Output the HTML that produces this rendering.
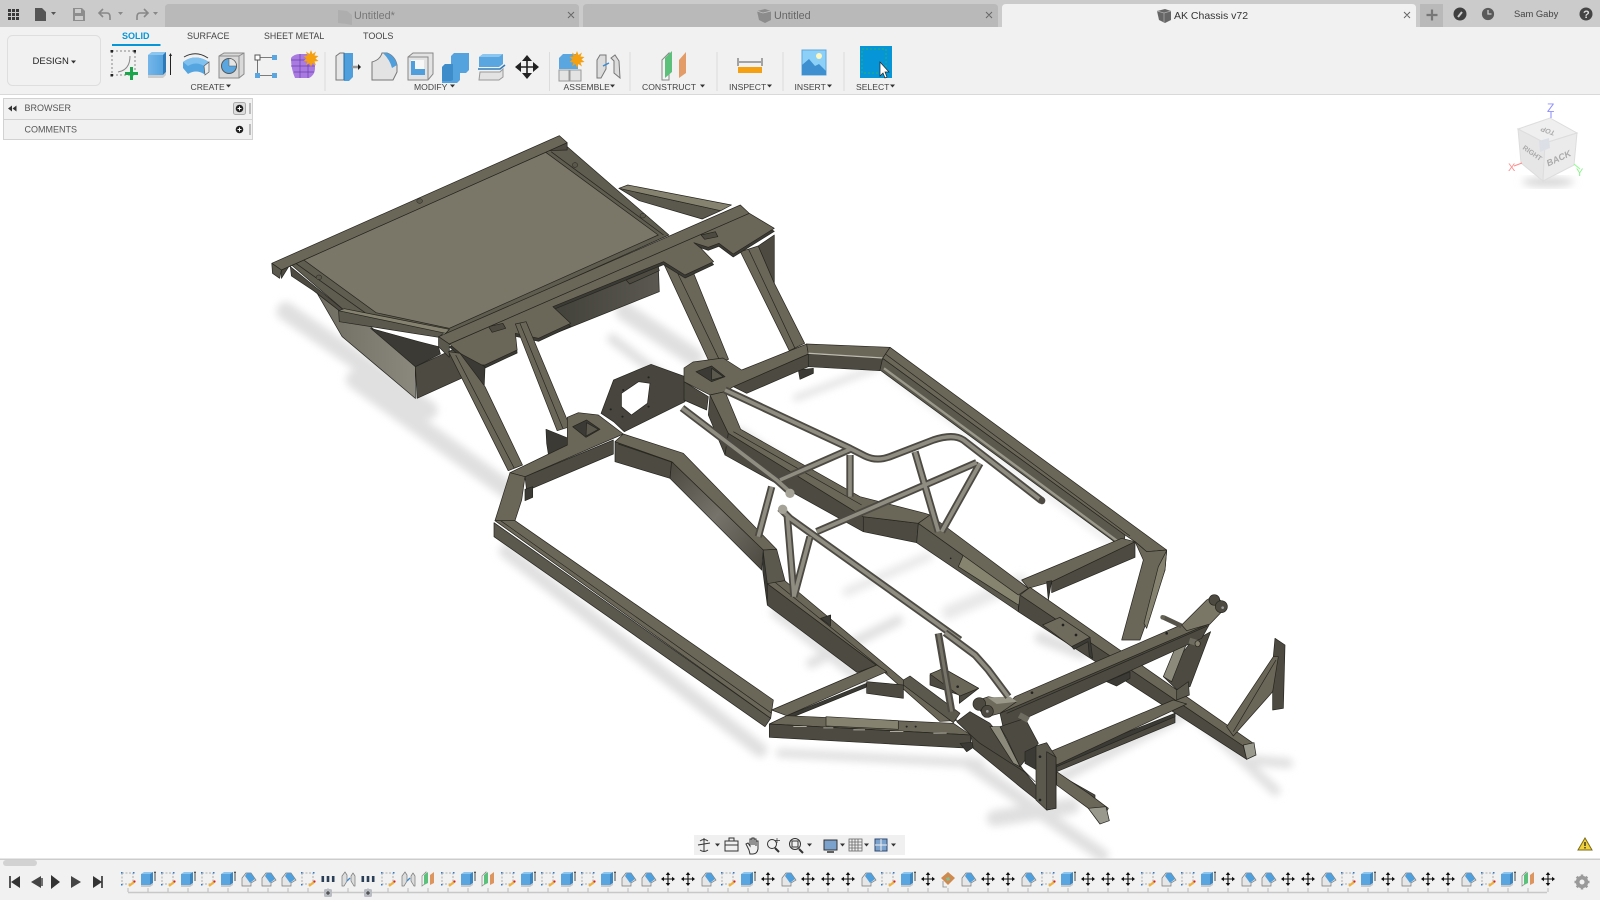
<!DOCTYPE html>
<html><head><meta charset="utf-8"><title>AK Chassis v72</title>
<style>
html,body{margin:0;padding:0;background:#fff;width:1600px;height:900px;overflow:hidden}
svg{display:block;position:absolute;left:0;top:0}
text{font-family:"Liberation Sans",sans-serif;fill:#444;font-size:9px}
.lb{font-size:8.6px}
.t,.s,.d,.l,.m{stroke:#26251f;stroke-width:.7;vector-effect:non-scaling-stroke;stroke-linejoin:round}
.t{fill:#6b6758}.s{fill:#4c4a41}.d{fill:#3b3a34}.l{fill:#85826f}.m{fill:#5b594e}
.ln{fill:none;stroke:#26251f;stroke-width:.7;vector-effect:non-scaling-stroke}
.sep{stroke:#dcdcdc;stroke-width:1}
</style></head><body>
<svg width="1600" height="900" viewBox="0 0 1600 900" xmlns="http://www.w3.org/2000/svg">
<defs>
<filter id="b" x="-20%" y="-20%" width="140%" height="140%"><feGaussianBlur stdDeviation="4"/></filter>
<linearGradient id="side1" x1="0" y1="0" x2="1" y2="0"><stop offset="0" stop-color="#6f6d62"/><stop offset="1" stop-color="#8b897e"/></linearGradient>
<linearGradient id="side2" x1="0" y1="0" x2="1" y2="0"><stop offset="0" stop-color="#3f3e37"/><stop offset="1" stop-color="#5a5850"/></linearGradient>
<linearGradient id="side3" x1="0" y1="0" x2="1" y2="1"><stop offset="0" stop-color="#4a483f"/><stop offset=".5" stop-color="#75736a"/><stop offset="1" stop-color="#4a483f"/></linearGradient>
<linearGradient id="bl" x1="0" y1="0" x2="1" y2="0"><stop offset="0" stop-color="#74b6ea"/><stop offset="1" stop-color="#4f9fdc"/></linearGradient>

<g id="S"><rect x="-6" y="-6" width="11" height="11" fill="none" stroke="#9a9a9a" stroke-width=".8" stroke-dasharray="2 1.5"/><g fill="#2a7ad0"><rect x="-7" y="-7" width="1.5" height="1.5"/><rect x="5" y="-7" width="1.5" height="1.5"/><rect x="-7" y="5" width="1.5" height="1.5"/></g><path d="M1 7L6 3" stroke="#f0b23c" stroke-width="2.2"/><circle cx="6.5" cy="2.5" r="1.1" fill="#e02020"/></g>
<g id="E"><path d="M-7-5h9v11h-9z" fill="#58a5e0"/><path d="M-7-5l3-2h9l-3 2z" fill="#8cc6ef"/><path d="M2-5l3-2v11l-3 2z" fill="#3c86c2"/><path d="M-7 6h9l3-2v2l-3 2h-9z" fill="#c9c9c9"/><path d="M7-7v9" stroke="#222" stroke-width=".8"/><path d="M6-6l1-2 1 2z" fill="#222"/></g>
<g id="F"><path d="M-6 7v-8l4-5h5l5 7-5 3v3z" fill="#e6e6e6" stroke="#777" stroke-width=".7"/><path d="M-1-6h4l4 6-5 4-5-7z" fill="#4f9fdc"/></g>
<g id="M"><path d="M-5 0h10M0-5v10" stroke="#111" stroke-width="1.1"/><path d="M-7 0l3-2.300v4.600zM7 0l-3-2.300v4.600zM0-7l-2.300 3h4.600zM0 7l-2.300-3h4.600z" fill="#111"/></g>
<g id="P"><g fill="#2a3e58"><rect x="-6.500" y="-3" width="2.600" height="6"/><rect x="-1.300" y="-3" width="2.600" height="6"/><rect x="3.900" y="-3" width="2.600" height="6"/></g></g>
<g id="J"><path d="M-6 7v-10l3-4 2 3v6l-3 5zM6 7l-3-5v-5l2-3 2 3v10z" fill="#ddd" stroke="#777" stroke-width=".7"/><path d="M-1 2l3-3" stroke="#3a8ad0" stroke-width="1.3"/></g>
<g id="L"><path d="M-6 7v-10l4-4v11z" fill="#f1f1f1" stroke="#888" stroke-width=".7"/><path d="M-4 6v-10l4-3v11z" fill="#5cc07a"/><path d="M2 6v-10l4-3v11z" fill="#dd9560"/></g>
<g id="D"><path d="M0-7l7 6-7 7-7-7z" fill="#cf8a4f"/><path d="M-2-1l3-1 1 3-3 1z" fill="#7fbf9a"/><path d="M-5 2v6h4" fill="none" stroke="#888" stroke-width=".8"/></g>
</defs>

<rect width="1600" height="900" fill="#fff"/>

<!-- SHADOWS -->
<g transform="scale(1.0204)" filter="url(#b)" fill="none" stroke="#e0e0e0" stroke-linecap="round">
<path d="M280 305L420 402" stroke-width="18"/>
<path d="M348 372L500 482" stroke-width="18"/>
<path d="M612 305L680 350" stroke-width="18"/>
<path d="M600 332L660 378" stroke-width="10"/>
<path d="M496 540L745 735" stroke-width="14"/>
<path d="M765 738L960 748" stroke-width="9"/>
<path d="M950 748L1080 838" stroke-width="13"/>
<path d="M725 424L850 512" stroke-width="10"/>
<path d="M780 390L860 360" stroke-width="6"/>
<path d="M760 600L852 672" stroke-width="10"/>
<path d="M975 802L1050 790" stroke-width="16"/>
<path d="M1040 762L1160 700" stroke-width="11"/>
<path d="M1170 700L1250 775" stroke-width="10"/>
<path d="M1228 745L1262 748" stroke-width="10"/>
<path d="M795 650L880 608" stroke-width="10"/>
<path d="M1020 625L1060 640" stroke-width="12"/>
<path d="M930 600L1000 570" stroke-width="14" opacity=".7"/>
<path d="M830 580L910 545" stroke-width="9" opacity=".7"/>
<path d="M870 365L1100 540" stroke-width="5" opacity=".8"/>
</g>

<!-- REAR SEAT -->
<g transform="translate(260 120) scale(.35714 .33333)">
<polygon fill="url(#side2)" stroke="#26251f" stroke-width=".7" vector-effect="non-scaling-stroke" points="820,555 1115,430 1118,515 780,660"/>
<polygon fill="url(#side1)" stroke="#26251f" stroke-width=".7" vector-effect="non-scaling-stroke" points="160,520 230,650 435,835 435,740 310,620 220,570"/>
<polygon class="s" points="435,740 640,640 640,738 440,835"/>
<polygon class="d" points="310,625 445,665 500,680 505,702 435,740"/>
<polygon class="t" points="1130,430 1215,462 1312,718 1262,735"/>
<path class="ln" d="M1165 450L1290 728"/>
<polygon class="s" points="1395,378 1440,345 1440,490"/>
<polygon class="t" points="1345,395 1395,378 1440,490 1525,670 1482,692"/>
<path class="ln" d="M1368 388L1498 685"/>
<polygon class="m" points="1005,205 1290,272 1238,297 1062,242"/>
<polygon class="l" points="1005,205 1030,195 1320,255 1290,272"/>
<polygon class="t" points="85,432 805,90 860,80 1145,345 530,640 325,585 240,575" style="fill:#5f5c50"/>
<polygon fill="#7b7768" stroke="#26251f" stroke-width=".7" vector-effect="non-scaling-stroke" points="120,418 800,97 1115,345 530,625 325,578"/>
<polygon class="s" points="85,440 240,575 222,572 150,512 88,468"/>
<path class="ln" d="M100 430L310 590M815 95L1130 345M130 412L800 90"/>
<polygon class="s" points="60,450 860,68 860,90 805,92 85,432 60,475"/>
<polygon class="t" points="33,430 838,47 860,68 60,450"/>
<polygon class="m" points="33,430 60,450 55,475 35,460"/>
<g fill="#5a574b" stroke="#111" stroke-width="1.100" vector-effect="non-scaling-stroke"><ellipse cx="447" cy="243" rx="8" ry="7"/><ellipse cx="165" cy="472" rx="8" ry="7"/><ellipse cx="882" cy="135" rx="8" ry="7"/><ellipse cx="1072" cy="287" rx="8" ry="7"/></g>
<polygon class="m" points="220,572 525,630 500,652 222,605"/>
<polygon class="l" points="220,572 236,566 530,628 520,640"/>
<polygon class="d" transform="translate(0 9)" points="530,672 1370,280 1440,325 1325,402 1285,370 1255,382 1215,368 1235,385 1270,425 1190,465 1130,425 820,560 870,610 780,655 715,640 720,690 630,735 600,735"/>
<polygon class="t" points="530,672 1370,280 1440,325 1325,402 1285,370 1255,382 1215,368 1235,385 1270,425 1190,465 1130,425 820,560 870,610 780,655 715,640 720,690 630,735 600,735"/>
<polygon class="s" points="640,620 680,610 688,625 650,637"/>
<polygon class="s" points="1235,345 1275,335 1282,350 1245,358"/>
<polygon class="s" points="1025,480 1115,440 1118,452 1035,492"/>
<polygon class="t" points="500,650 1345,255 1370,280 530,672"/>
<polygon class="m" points="500,650 530,672 530,712 500,680"/>
<polygon class="d" points="560,700 630,740 625,870"/>
<polygon class="t" points="528,695 560,700 630,800 735,1035 695,1052"/>
<path class="ln" d="M548 705L712 1045"/>
<polygon class="t" points="715,612 745,605 868,920 832,932"/>
<path class="ln" d="M728 610L848 925"/>
<path fill="#47453d" stroke="#26251f" stroke-width=".7" vector-effect="non-scaling-stroke" fill-rule="evenodd" d="M955 880L990 780 1095 733 1190 770 1190 845 1020 935 990 905ZM1012 820L1012 860 1040 885 1085 850 1092 790 1060 785Z"/>
<g fill="#23221e"><circle cx="982" cy="868" r="3"/><circle cx="1017" cy="810" r="3"/><circle cx="1088" cy="772" r="3"/><circle cx="1088" cy="860" r="3"/><circle cx="1015" cy="890" r="3"/></g>
</g>

<!-- MAIN FRAME left half -->
<g transform="translate(480 330) scale(.33333)">
<polygon class="d" points="198,298 265,325 278,352 205,372 200,340"/>
<polygon class="s" points="135,440 400,330 400,372 140,482"/>
<polygon class="t" points="90,428 262,345 262,262 295,248 355,255 430,312 135,440"/>
<polygon class="d" points="278,290 320,270 360,298 318,322"/>
<polygon class="m" points="320,278 355,298 318,318"/>
<polygon class="m" points="42,578 872,1165 855,1190 42,620"/>
<polygon class="t" points="90,428 135,440 125,510 105,572 45,572"/>
<polygon class="t" points="45,572 105,572 880,1110 872,1165"/>
<path class="ln" d="M62 572L875 1150"/>
<polygon class="d" points="135,478 158,470 158,502 135,512"/>
<polygon class="s" points="405,335 575,395 570,445 405,395"/>
<polygon fill="url(#side3)" stroke="#26251f" stroke-width=".7" vector-effect="non-scaling-stroke" points="575,395 850,660 845,720 570,445"/>
<polygon class="t" points="430,312 610,370 890,658 850,660 575,395 405,335"/>
<path class="ln" d="M415 342L580 398"/>
<polygon class="m" points="850,660 890,658 915,752 862,762 850,700"/>
<polygon class="d" points="850,668 862,762 862,825 848,720"/>
</g>

<!-- LONG RAIL to front -->
<g transform="scale(1.0204)">
<polygon class="s" points="752,572 859,652 840,659 752,593"/>
<polygon class="t" points="769,569 885,666 938,706 921,707 859,652 752,572"/>
<path class="ln" d="M760 571L870 660"/>
</g>

<!-- MAIN FRAME upper/centre -->
<g transform="translate(700 340) scale(.33333)">
<polygon class="d" points="295,90 340,85 340,100 300,118"/>
<polygon class="s" points="100,140 325,42 325,80 140,160"/>
<polygon class="s" points="-48,125 25,170 20,210 -48,180"/>
<polygon class="t" points="-48,84 -21,66 69,54 125,90 320,12 325,42 100,140 75,155 30,165 -48,125"/>
<polygon class="d" points="-12,95 35,78 75,110 35,125"/>
<polygon class="m" points="35,85 70,110 35,120"/>
<polygon class="s" points="320,12 570,22 548,55 325,42" style="fill:#6b6758"/>
<polygon class="s" points="325,42 548,55 540,92 325,80"/>
<path fill="#bdbbb0" d="M325 38L548 52 548 56 325 42Z"/>
<polygon class="m" points="548,55 1275,585 1270,625 540,90"/>
<path d="M552 85L1275 620" stroke="#9a988b" stroke-width="7" fill="none"/>
<polygon class="t" points="570,22 1400,630 1340,635 1305,605 1275,585 548,55"/>
<path class="ln" d="M556 42L1290 588"/>
<polygon class="s" points="30,165 85,280 75,345 25,225"/>
<polygon class="s" points="85,280 490,530 490,575 75,345"/>
<polygon class="s" points="490,530 655,550 650,608 490,575"/>
<polygon class="t" points="30,165 75,155 122,268 480,470 675,520 690,525 655,550 490,530 85,280"/>
<path class="ln" d="M100 275L485 495"/>
<polygon class="s" points="1055,725 1305,605 1305,652 1055,758"/>
<polygon class="t" points="965,720 1265,595 1305,605 1055,725 985,745"/>
<polygon class="d" points="1040,725 1055,722 1045,780"/>
<polygon class="m" points="655,550 955,765 955,815 650,608"/>
<polygon class="l" points="775,680 800,622 985,745 955,795" style="fill:#86836f"/>
<polygon class="t" points="655,550 690,525 985,745 955,765"/>
<circle cx="752" cy="655" r="2.500" fill="#222"/>
<polygon class="t" points="1305,605 1340,635 1400,630 1395,690 1320,900 1265,900 1330,660"/>
<polygon class="l" points="1400,632 1395,690 1340,865 1332,850 1375,680"/>
<polygon class="d" points="362,835 392,825 392,858"/>
</g>

<!-- Front-left region -->
<g transform="translate(740 600) scale(.33333)">
<polygon class="d" points="140,347 380,250 378,262 165,348"/>
<polygon class="t" points="95,330 410,195 440,215 140,347"/>
<polygon class="s" points="380,245 490,255 490,295 380,280"/>
<polygon class="s" points="570,225 610,205 716,265 658,310 658,285 570,255"/>
<polygon class="t" points="570,222 610,205 716,265 660,288"/>
<circle cx="653" cy="260" r="4" fill="#222"/>
<polygon class="m" points="490,240 510,228 660,340 640,368 490,255"/>
<polygon class="t" points="88,372 140,347 640,370 692,405"/>
<polygon class="s" points="88,372 692,405 692,445 88,412"/>
<polygon class="d" points="660,430 726,425 680,455"/>
<polygon class="l" points="258,350 475,362 475,388 258,378"/>
<g fill="#c8c6bb" opacity=".8"><rect x="160" y="378" width="40" height="3"/><rect x="250" y="382" width="30" height="3"/><rect x="340" y="388" width="35" height="3"/><rect x="450" y="393" width="40" height="3"/><rect x="580" y="398" width="40" height="3"/></g>
<circle cx="500" cy="380" r="3" fill="#222"/><circle cx="527" cy="380" r="3" fill="#222"/>
<polygon class="s" points="692,405 850,510 890,560 890,600 840,560 700,445"/>
<polygon class="s" points="650,365 690,335 750,370 790,420 850,510 885,545 860,520 720,430 692,405"/>
</g>

<!-- Front -->
<g transform="translate(900 500) scale(.33333)">
<polygon class="s" points="360,285 1030,738 1040,778 355,335"/>
<polygon class="t" points="360,285 390,262 1060,730 1030,738"/>
<polygon fill="#9a998e" stroke="#26251f" stroke-width=".7" vector-effect="non-scaling-stroke" points="1030,735 1062,728 1068,765 1040,778"/>
<polygon fill="#6e6a5c" stroke="#26251f" stroke-width=".7" vector-effect="non-scaling-stroke" points="428,375 480,352 570,412 515,440"/>
<circle cx="489" cy="375" r="4" fill="#222"/><circle cx="528" cy="405" r="4" fill="#222"/>
<polygon class="d" points="515,440 570,412 578,475 568,468 564,425 522,448"/>
<polygon class="d" points="620,545 690,515 690,535 650,558"/>
<polygon class="s" points="1118,570 1120,470 1125,415 1155,435 1150,625 1118,630"/>
<polygon class="t" points="980,680 1120,470 1135,470 1118,575 1000,708"/>
<path class="ln" d="M1000 695L1128 480"/>
<polygon class="s" points="470,795 825,640 825,668 470,815"/>
<polygon class="d" points="470,780 825,640 825,650 470,800"/>
<polygon class="t" points="450,755 820,600 860,612 470,795"/>
<polygon class="s" points="380,760 470,820 585,885 585,905 470,840 380,790"/>
<polygon class="t" points="470,815 565,880 625,925 600,972 565,925 470,855"/>
<polygon fill="#9a998e" stroke="#26251f" stroke-width=".7" vector-effect="non-scaling-stroke" points="565,925 618,920 628,962 600,972"/>
<polygon class="s" points="870,430 932,395 870,560 830,568 790,530"/>
<polygon fill="#8c8a7b" stroke="#26251f" stroke-width=".7" vector-effect="non-scaling-stroke" points="790,530 825,445 860,430 815,545"/>
<polygon class="m" points="830,570 865,545 868,585 830,600"/>
<polygon class="s" points="300,640 930,370 905,415 310,685"/>
<polygon class="t" points="345,590 850,372 930,370 300,640"/>
<path class="ln" d="M320 640L922 378"/>
<circle cx="396" cy="578" r="4" fill="#222"/><circle cx="800" cy="400" r="4" fill="#222"/>
<path d="M790 352L845 378" stroke="#55534a" stroke-width="14"/>
<circle cx="788" cy="352" r="7" fill="#666357"/>
<polygon class="l" points="845,375 920,300 945,285 980,320 930,372 860,392" style="fill:#7a7766"/>
<circle cx="943" cy="300" r="16" class="s"/><circle cx="964" cy="320" r="18" class="s"/><circle cx="968" cy="323" r="4" fill="#999"/>
<path d="M868 422L895 430" stroke="#6e6c60" stroke-width="18"/>
<ellipse cx="893" cy="431" rx="8" ry="9" class="l"/>
<polygon class="t" points="222,605 265,590 350,605 300,640 255,652" style="fill:#6e6a5c"/>
<polygon fill="#9a9889" points="262,592 330,590 352,605 290,612"/>
<circle cx="238" cy="612" r="19" class="s"/><circle cx="262" cy="634" r="18" class="s"/><circle cx="262" cy="634" r="4" fill="#999"/>
<polygon class="s" points="300,680 375,655 415,730 360,800 320,715"/>
<polygon fill="#8c8a7b" stroke="#26251f" stroke-width=".7" vector-effect="non-scaling-stroke" points="270,680 300,680 360,800 340,790"/>
<path d="M358 645L385 660" stroke="#6e6c60" stroke-width="18"/>
<polygon class="d" points="375,755 410,738 410,810 375,790"/>
<polygon class="m" points="408,738 440,728 468,772 468,925 440,930 408,900"/>
<polygon class="s" points="440,755 468,772 468,925 440,930"/>
<circle cx="420" cy="770" r="4" fill="#222"/><circle cx="420" cy="900" r="4" fill="#222"/>
</g>

<!-- TUBES -->
<g transform="translate(700 340) scale(.33333)" fill="none" stroke-linejoin="round">
<g stroke="#4c4a42" stroke-width="22">
<path d="M450 345V470M645 335L715 575M840 370L725 575M215 440L175 590M262 530L282 770M330 590L282 770"/>
<path d="M240 420L450 328M350 575L830 368"/>
<path d="M-54 204L230 420 275 460M75 150L450 325 495 348Q530 365 570 350L700 300Q760 280 790 300L1025 482M240 505L270 535 780 900"/>
</g>
<g stroke="#8f8d81" stroke-width="11">
<path d="M450 345V470M645 335L715 575M840 370L725 575M215 440L175 590M262 530L282 770M330 590L282 770"/>
<path d="M240 420L450 328M350 575L830 368"/>
<path d="M-54 204L230 420 275 460M75 150L450 325 495 348Q530 365 570 350L700 300Q760 280 790 300L1025 482M240 505L270 535 780 900"/>
</g>
<ellipse cx="1026" cy="482" rx="10" ry="11" fill="#4c4a42"/>
<circle cx="270" cy="460" r="14" fill="#a5a398"/>
<circle cx="248" cy="508" r="14" fill="#a5a398"/>
</g>
<g transform="translate(900 500) scale(.33333)" fill="none" stroke-linejoin="round">
<path d="M135 398L225 465 265 510 325 590" stroke="#4c4a42" stroke-width="22"/>
<path d="M135 398L225 465 265 510 325 590" stroke="#8f8d81" stroke-width="11"/>
<path d="M115 400L155 635" stroke="#4c4a42" stroke-width="22"/>
<path d="M115 400L155 635" stroke="#77756a" stroke-width="9"/>
</g>

<!-- TOP BAR -->
<rect width="1600" height="27" fill="#cbcbcb"/>
<path d="M165 27V8q0-4 4-4H575q4 0 4 4V27Z" fill="#b9b9b9"/>
<path d="M583 27V8q0-4 4-4H994q4 0 4 4V27Z" fill="#b9b9b9"/>
<path d="M1002 27V8q0-4 4-4H1412q4 0 4 4V27Z" fill="#f1f1f1"/>
<rect x="1420" y="4" width="23" height="23" fill="#b9b9b9"/>
<g fill="#3a3a3a"><rect x="8" y="9" width="3" height="3"/><rect x="12" y="9" width="3" height="3"/><rect x="16" y="9" width="3" height="3"/><rect x="8" y="13" width="3" height="3"/><rect x="12" y="13" width="3" height="3"/><rect x="16" y="13" width="3" height="3"/><rect x="8" y="17" width="3" height="3"/><rect x="12" y="17" width="3" height="3"/><rect x="16" y="17" width="3" height="3"/></g>
<path d="M35 8h7l4 4v9H35z" fill="#555"/><path d="M51 12h5l-2.500 3z" fill="#555"/>
<path d="M73 8h9l3 3v10H73z" fill="#8d8d8d"/><rect x="75" y="9" width="6" height="4" fill="#cbcbcb"/><rect x="75" y="16" width="8" height="4" fill="#cbcbcb"/>
<path d="M103 9l-4 4 4 4M99 13h8q3 0 3 4v3" fill="none" stroke="#888" stroke-width="1.600"/><path d="M118 12h5l-2.500 3z" fill="#888"/>
<path d="M144 9l4 4-4 4M148 13h-8q-3 0-3 4v3" fill="none" stroke="#888" stroke-width="1.600"/><path d="M153 12h5l-2.500 3z" fill="#888"/>
<path d="M338 10l9 1 5 4v10l-5-1-9-1z" fill="#aaa" opacity=".7"/>
<text x="354" y="19" style="font-size:10.800px;fill:#777">Untitled*</text>
<path d="M568 12l6 6M574 12l-6 6M986 12l6 6M992 12l-6 6M1404 12l6 6M1410 12l-6 6" stroke="#666" stroke-width="1"/>
<path d="M757 11l8-2 6 2v9l-6 3-6-3z" fill="#8c8c8c"/><path d="M757 11l6 2 8-2" fill="none" stroke="#c4c4c4" stroke-width=".7"/>
<text x="774" y="19" style="font-size:10.800px;fill:#666">Untitled</text>
<path d="M1157 11l8-2 6 2v9l-6 3-6-3z" fill="#666"/><path d="M1157 11l7 2 7-2M1164 13v10" fill="none" stroke="#b0b0b0" stroke-width=".7"/>
<text x="1174" y="19" style="font-size:10.500px;fill:#333">AK Chassis v72</text>
<path d="M1432 9.500v11M1426.500 15h11" stroke="#777" stroke-width="2.200"/>
<circle cx="1460" cy="14" r="6.500" fill="#3f3f3f"/><path d="M1458 17l4-5" stroke="#cbcbcb" stroke-width="2"/>
<circle cx="1488" cy="14" r="6.500" fill="#5a5a5a"/><circle cx="1488" cy="14" r="6.500" fill="none" stroke="#cbcbcb" stroke-width=".8"/><path d="M1488 10v4h3.500" fill="none" stroke="#cbcbcb" stroke-width="1.300"/>
<text x="1514" y="17" style="font-size:9.400px;fill:#444">Sam Gaby</text>
<circle cx="1586" cy="14" r="6.500" fill="#444"/><text x="1583" y="18" style="font-size:11px;font-weight:bold;fill:#ddd">?</text>

<!-- TOOLBAR -->
<rect y="27" width="1600" height="67" fill="#f1f1f1"/>
<rect y="94" width="1600" height="1" fill="#d9d9d9"/>
<rect x="7.500" y="35.500" width="93" height="50" rx="5" fill="#f1f1f1" stroke="#dedede"/>
<text x="32.500" y="64" style="font-size:9.500px;fill:#222">DESIGN</text><path d="M71 60.500h5l-2.500 3z" fill="#333"/>
<text x="122" y="39" style="font-size:9px;fill:#0696d7;font-weight:bold">SOLID</text>
<rect x="112" y="44" width="48.500" height="2" fill="#0696d7"/>
<text x="187" y="39">SURFACE</text><text x="264" y="39" style="font-size:8.800px">SHEET METAL</text><text x="363" y="39">TOOLS</text>
<text class="lb" x="190.500" y="90">CREATE</text><path d="M226 84.500h5l-2.500 3z" fill="#333"/>
<text class="lb" x="414" y="90">MODIFY</text><path d="M450 84.500h5l-2.500 3z" fill="#333"/>
<text class="lb" x="563.500" y="90">ASSEMBLE</text><path d="M610 84.500h5l-2.500 3z" fill="#333"/>
<text class="lb" x="642" y="90">CONSTRUCT</text><path d="M700 84.500h5l-2.500 3z" fill="#333"/>
<text class="lb" x="729" y="90">INSPECT</text><path d="M767 84.500h5l-2.500 3z" fill="#333"/>
<text class="lb" x="794.500" y="90">INSERT</text><path d="M827 84.500h5l-2.500 3z" fill="#333"/>
<text class="lb" x="856" y="90">SELECT</text><path d="M890 84.500h5l-2.500 3z" fill="#333"/>
<path class="sep" d="M325 52V91M549.500 52V91M630 52V91M717 52V91M783 52V91M844 52V91"/>

<rect x="112" y="51" width="23" height="24" fill="none" stroke="#888" stroke-dasharray="2 2"/>
<g fill="#222"><rect x="110.500" y="50" width="2.500" height="2.500"/><rect x="133.500" y="50" width="2.500" height="2.500"/><rect x="110.500" y="74" width="2.500" height="2.500"/></g>
<path d="M118 72q12-2 12-16" fill="none" stroke="#888"/><path d="M130 67h3v5h5v3h-5v5h-3v-5h-5v-3h5z" fill="#1aa64b"/>
<path d="M148 55l4-3h14v20l-3 3h-15z" fill="url(#bl)"/><path d="M148 55l4-3h14l-3 3z" fill="#8cc6ef"/><path d="M163 55l3-3v20l-3 3z" fill="#2f7ab6"/><path d="M148 75h15l3-3v3l-3 3h-15z" fill="#ccc"/>
<path d="M170.500 55v20" stroke="#222"/><path d="M169 56l1.500-3 1.500 3z" fill="#222"/>
<path d="M183 68v-6q12-9 26 0v8l-5 4q-8-5-16 0z" fill="#55a5e0"/><path d="M183 62q12-9 26 0l-5 4q-8-5-16 0z" fill="#7fc0ee"/><path d="M204 66l5-4v10l-4 3z" fill="#ececec" stroke="#555" stroke-width=".7"/>
<path d="M184 57q12-7 24 1" fill="none" stroke="#333"/>
<path d="M219 56l5-3h20v21l-5 4h-20z" fill="#d9d9d9" stroke="#8a8a8a"/><path d="M219 56h20v22M239 56l5-3" fill="none" stroke="#8a8a8a"/><circle cx="229" cy="66" r="7.500" fill="#5aa6e0" stroke="#555"/><path d="M229 66v-7.500a7.500 7.500 0 0 1 7.500 7.500z" fill="#e5e5e5" stroke="#555" stroke-width=".5"/>
<rect x="255" y="55" width="5" height="5" fill="#fff" stroke="#555"/><rect x="272" y="55" width="5" height="5" fill="#5aa6e0"/><rect x="255" y="73" width="5" height="5" fill="#5aa6e0"/><rect x="272" y="73" width="5" height="5" fill="#5aa6e0"/>
<path d="M260 57.500h12M257.500 60v13M260 75.500h12" stroke="#555" stroke-width=".8"/>
<path d="M291 58q3-4 9-4h10q5 6 5 14 0 7-6 10h-14q-4-9-4-20z" fill="#a97ae0"/><path d="M300 54v24M291 66h24M291 60h20M294 72h20M308 54v24" stroke="#6b3fb0" stroke-width=".7"/>
<path d="M311 50l1.500 4 3.500-2.500-1.500 4 4 .5-3 2.500 3 2.500-4 .5 1.500 4-3.500-2.500-1.500 4-1.500-4-3.500 2.500 1.500-4-4-.5 3-2.500-3-2.500 4-.5-1.500-4 3.500 2.500z" fill="#f5a011"/>
<path d="M336 80V56l4-3h4v27z" fill="#e6e6e6" stroke="#777"/><path d="M344 53h9v24l-4 4h-5z" fill="#4f9fdc"/><path d="M344 80V53" stroke="#1f6ea8"/><path d="M352 67h6" stroke="#999" stroke-width="2.500"/><path d="M358 64l3 3-3 3z" fill="#222"/>
<path d="M372 80V62q8-2 10-9h5q8 3 10 12v7l-4 8z" fill="#e3e3e3" stroke="#777"/><path d="M383 53h4q8 3 10 12l-5 3q-2-8-9-15z" fill="#4f9fdc"/>
<path d="M408 57l5-4h20v21l-5 6h-20z" fill="#e3e3e3" stroke="#888"/><path d="M408 57h20v23" fill="none" stroke="#888"/><path d="M411 60h13v15h-13z" fill="#f7f7f7"/><path d="M411 61h4v8h10v6h-14z" fill="#4f9fdc"/>
<path d="M442 67l3-3h6v-8l3-3h15v17l-3 3h-6v7l-3 3h-15z" fill="#54a3de"/><path d="M442 67l3-3h8v16l-2 1h-9z" fill="#3f8ccb"/>
<path d="M479 57l4-3h20v10l-4 3h-20z" fill="#5aa6e0"/><path d="M479 57l4-3h20l-4 3z" fill="#8cc6ef"/><path d="M478 69h22l5-4" fill="none" stroke="#2f7ab6" stroke-width="1.500"/><path d="M480 72h20l3-3v8l-4 3h-20z" fill="#e3e3e3" stroke="#999"/>
<path d="M518 67h18M527 58v18" stroke="#222" stroke-width="1.600"/><path d="M515 67l6-5v10zM539 67l-6-5v10zM527 55l-5 6h10zM527 79l-5-6h10z" fill="#222"/>
<path d="M559 69v-11l4-4h15v15h-8z" fill="#5aa6e0"/><rect x="559" y="70" width="10" height="11" fill="#e3e3e3" stroke="#999"/><rect x="570" y="70" width="11" height="11" fill="#e3e3e3" stroke="#999"/>
<path d="M577 51l1.500 4 3.500-2.500-1.500 4 4 .5-3 2.500 3 2.500-4 .5 1.500 4-3.500-2.500-1.500 4-1.500-4-3.500 2.500 1.500-4-4-.5 3-2.500-3-2.500 4-.5-1.500-4 3.500 2.500z" fill="#f5a011"/>
<path d="M597 78V60l3-5 6 0v14l-5 9zM620 78l-6-5v-12l-3-3 4-3 4 6z" fill="#dcdcdc" stroke="#777"/><path d="M603 66l6-3" stroke="#3a8ad0" stroke-width="1.500"/>
<path d="M662 80V60l7-7v27z" fill="#f5f5f5" stroke="#888"/><path d="M665 78V58l7-7v21z" fill="#5cc07a"/><path d="M679 78V60l7-8v21z" fill="#e39c67"/>
<path d="M738 58v8M762 58v8" stroke="#555"/><path d="M739 62h22" stroke="#555"/><rect x="738" y="67" width="24" height="6" fill="#f5a011"/>
<rect x="802" y="50" width="24" height="25" fill="#8dd0f7" stroke="#5aa6e0"/><circle cx="819" cy="56" r="3" fill="#fff7c0"/><path d="M802 75v-10l7-6 6 7 4-2 7 7v4z" fill="#3d8fcf"/>
<rect x="860" y="46" width="32" height="32" fill="#0696d7"/><rect x="862" y="49" width="24" height="24" fill="none" stroke="#27b36b" stroke-dasharray="2 2"/><path d="M880 62v14l3-3 2 5 2-1-2-5h4z" fill="#fff" stroke="#222" stroke-width=".7"/>

<!-- BROWSER -->
<rect x="3.500" y="98.500" width="249" height="41" fill="#f1f1f1" stroke="#d2d2d2"/>
<path d="M4 119.500H253" stroke="#d2d2d2"/>
<path d="M8 108.500l4-3v6zM12.500 108.500l4-3v6z" fill="#333"/>
<text x="24.500" y="111" style="font-size:9px;fill:#555">BROWSER</text>
<text x="24.500" y="132.500" style="font-size:9px;fill:#555">COMMENTS</text>
<rect x="233.500" y="102.500" width="12" height="12" rx="2" fill="#ddd" stroke="#aaa"/>
<circle cx="239.500" cy="108.500" r="3.800" fill="#222"/><path d="M239.500 106.500v4M237.500 108.500h4" stroke="#fff"/>
<circle cx="239.500" cy="129.500" r="3.800" fill="#222"/><path d="M239.500 127.500v4M237.500 129.500h4" stroke="#fff"/>
<path d="M250 103v11M250 124v11" stroke="#888"/>

<!-- VIEWCUBE -->
<ellipse cx="1548" cy="182" rx="26" ry="5" fill="#d8d8d8" filter="url(#b)"/>
<polygon points="1518,129 1550,118 1577,133 1545,143" fill="#efefef" stroke="#ddd"/>
<polygon points="1518,129 1545,143 1543,181 1521,163" fill="#e6e6e6" stroke="#ddd"/>
<polygon points="1545,143 1577,133 1574,165 1543,181" fill="#ebebeb" stroke="#ddd"/>
<polygon points="1539,141 1549,138 1550,148 1540,152" fill="#dcdfe6"/>
<text transform="translate(1549 129) rotate(200) skewX(-10)" style="font-size:7px;font-weight:bold;fill:#aaa" text-anchor="middle">TOP</text>
<text transform="translate(1531 155) rotate(35)" style="font-size:7px;font-weight:bold;fill:#aaa" text-anchor="middle">RIGHT</text>
<text transform="translate(1560 161) rotate(-25)" style="font-size:9px;font-weight:bold;font-style:italic;fill:#aaa" text-anchor="middle">BACK</text>
<path d="M1551 112v6" stroke="#8a8aff"/><path d="M1514 166l8-3" stroke="#ff8a8a"/><path d="M1574 164l6 5" stroke="#8aff8a"/>
<text x="1547" y="112" style="font-size:12px;fill:#8f8fff">Z</text>
<text x="1508" y="171" style="font-size:11px;fill:#ff8f8f">X</text>
<text x="1576" y="176" style="font-size:11px;fill:#8fef8f">Y</text>

<!-- NAV BAR -->
<rect x="694" y="835" width="211" height="20" fill="#f0f0f0"/>
<g fill="none" stroke="#333" stroke-width="1">
<path d="M704 838v13M698 845l12-2M700 841q4-3 8 0M700 850q4 3 8 0"/>
<rect x="725" y="841" width="13" height="10"/><path d="M725 845h13M729 841v-3h5v3"/>
<path d="M749 850l-3-6 2-1 2 3v-7h2v6-7h2v7-6h2v7-5h2v8q-1 5-5 5h-3z"/>
<circle cx="772" cy="844" r="4.500"/><path d="M775 848l4 4" stroke-width="2"/><path d="M777 838v5M775 840.500h5" stroke-width=".7"/>
<circle cx="795" cy="844" r="5.500"/><rect x="792" y="841" width="6" height="6"/><path d="M799 849l4 4" stroke-width="2"/>
</g>
<path d="M715 843.500h5l-2.500 3zM807 843.500h5l-2.500 3zM840 843.500h5l-2.500 3zM864 843.500h5l-2.500 3zM891 843.500h5l-2.500 3z" fill="#333"/>
<rect x="824" y="840" width="13" height="10" fill="#7ba2cc" stroke="#333"/><path d="M827 852h7" stroke="#333" stroke-width="1.500"/>
<g fill="none" stroke="#666" stroke-width=".8"><rect x="849" y="839" width="13" height="12"/><path d="M852 839v12M855 839v12M858 839v12M849 842h13M849 845h13M849 848h13"/></g>
<rect x="875" y="839" width="12" height="12" fill="#7ba2cc" stroke="#2f4a70"/><path d="M875 845h12M881 839v12" stroke="#f0f0f0"/>

<path d="M1585 838l7 12h-14z" fill="#f2d23a" stroke="#7a6a1a"/><path d="M1585 842v4M1585 847v1.500" stroke="#222" stroke-width="1.300"/>

<!-- TIMELINE -->
<rect y="859" width="1600" height="41" fill="#f1f1f1"/>
<rect y="858.500" width="1600" height="1.500" fill="#cccccc"/>
<rect x="3" y="860" width="34" height="6" rx="3" fill="#d2d2d2"/>
<path d="M10 876v12" stroke="#222" stroke-width="1.500"/><path d="M20 876v12l-9-6z" fill="#333"/>
<path d="M41 876v12l-10-6z" fill="#444"/><path d="M42 878v8" stroke="#444" stroke-width="1.500"/>
<path d="M51 875v14l9-7z" fill="#333"/>
<path d="M73 878v8" stroke="#444" stroke-width="1.500"/><path d="M71 876v12l10-6z" fill="#444"/>
<path d="M93 876v12l9-6z" fill="#333"/><path d="M102 876v12" stroke="#222" stroke-width="1.500"/>
<path d="M128 892.500H1547" stroke="#c8c8c8" stroke-width="1.500"/>
<path d="M128 888v4M148 888v4M168 888v4M188 888v4M208 888v4M228 888v4M248 888v4M268 888v4M288 888v4M308 888v4M328 888v4M348 888v4M368 888v4M388 888v4M408 888v4M428 888v4M448 888v4M468 888v4M488 888v4M508 888v4M528 888v4M548 888v4M568 888v4M588 888v4M608 888v4M628 888v4M648 888v4M668 888v4M688 888v4M708 888v4M728 888v4M748 888v4M768 888v4M788 888v4M808 888v4M828 888v4M848 888v4M868 888v4M888 888v4M908 888v4M928 888v4M948 888v4M968 888v4M988 888v4M1008 888v4M1028 888v4M1048 888v4M1068 888v4M1088 888v4M1108 888v4M1128 888v4M1148 888v4M1168 888v4M1188 888v4M1208 888v4M1228 888v4M1248 888v4M1268 888v4M1288 888v4M1308 888v4M1328 888v4M1348 888v4M1368 888v4M1388 888v4M1408 888v4M1428 888v4M1448 888v4M1468 888v4M1488 888v4M1508 888v4M1528 888v4M1548 888v4" stroke="#bbb"/>
<rect x="324" y="889" width="8" height="8" rx="1.500" fill="#b9bcc2"/><path d="M328 891v4M326 893h4" stroke="#333"/>
<rect x="364" y="889" width="8" height="8" rx="1.500" fill="#b9bcc2"/><path d="M368 891v4M366 893h4" stroke="#333"/>
<g transform="translate(0 879)">
<use href="#S" x="128"/><use href="#E" x="148"/><use href="#S" x="168"/><use href="#E" x="188"/><use href="#S" x="208"/><use href="#E" x="228"/><use href="#F" x="248"/><use href="#F" x="268"/><use href="#F" x="288"/><use href="#S" x="308"/><use href="#P" x="328"/><use href="#J" x="348"/><use href="#P" x="368"/><use href="#S" x="388"/><use href="#J" x="408"/><use href="#L" x="428"/><use href="#S" x="448"/><use href="#E" x="468"/><use href="#L" x="488"/><use href="#S" x="508"/><use href="#E" x="528"/><use href="#S" x="548"/><use href="#E" x="568"/><use href="#S" x="588"/><use href="#E" x="608"/><use href="#F" x="628"/><use href="#F" x="648"/><use href="#M" x="668"/><use href="#M" x="688"/><use href="#F" x="708"/><use href="#S" x="728"/><use href="#E" x="748"/><use href="#M" x="768"/><use href="#F" x="788"/><use href="#M" x="808"/><use href="#M" x="828"/><use href="#M" x="848"/><use href="#F" x="868"/><use href="#S" x="888"/><use href="#E" x="908"/><use href="#M" x="928"/><use href="#D" x="948"/><use href="#F" x="968"/><use href="#M" x="988"/><use href="#M" x="1008"/><use href="#F" x="1028"/><use href="#S" x="1048"/><use href="#E" x="1068"/><use href="#M" x="1088"/><use href="#M" x="1108"/><use href="#M" x="1128"/><use href="#S" x="1148"/><use href="#F" x="1168"/><use href="#S" x="1188"/><use href="#E" x="1208"/><use href="#M" x="1228"/><use href="#F" x="1248"/><use href="#F" x="1268"/><use href="#M" x="1288"/><use href="#M" x="1308"/><use href="#F" x="1328"/><use href="#S" x="1348"/><use href="#E" x="1368"/><use href="#M" x="1388"/><use href="#F" x="1408"/><use href="#M" x="1428"/><use href="#M" x="1448"/><use href="#F" x="1468"/><use href="#S" x="1488"/><use href="#E" x="1508"/><use href="#L" x="1528"/><use href="#M" x="1548"/>
</g>
<g transform="translate(1582 882)"><circle r="4.500" fill="none" stroke="#9a9a9a" stroke-width="3.500"/><path d="M0-7.500V7.500M-7.500 0H7.500M-5.300-5.300L5.300 5.300M-5.300 5.300L5.300-5.300" stroke="#9a9a9a" stroke-width="2.500"/><circle r="2.500" fill="#f1f1f1"/></g>
</svg>
</body></html>
